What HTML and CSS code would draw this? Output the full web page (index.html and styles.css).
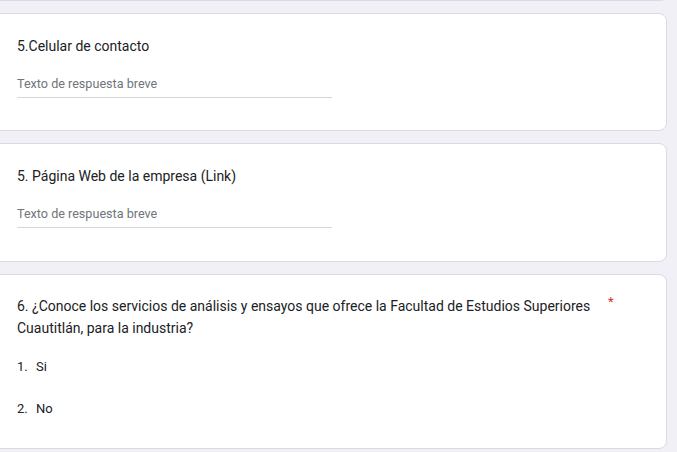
FILE: index.html
```html
<!DOCTYPE html>
<html lang="es">
<head>
<meta charset="utf-8">
<link rel="stylesheet" href="styles.css">
</head>
<body>
<div class="page">
  <div class="card card-prev"></div>
  <div class="card q-short first">
    <div class="q-title">5.Celular de contacto</div>
    <div class="short-input">Texto de respuesta breve</div>
  </div>
  <div class="card q-short">
    <div class="q-title">5. Página Web de la empresa (Link)</div>
    <div class="short-input">Texto de respuesta breve</div>
  </div>
  <div class="card q-choice">
    <div class="q-head">
      <div class="q-title long">6. ¿Conoce los servicios de análisis y ensayos que ofrece la Facultad de Estudios Superiores Cuautitlán, para la industria?</div>
      <span class="req">*</span>
    </div>
    <ol class="options">
      <li><span class="num">1.</span>Si</li>
      <li><span class="num">2.</span>No</li>
    </ol>
  </div>
</div>
</body>
</html>
```
FILE: styles.css
```css
html, body {
  margin: 0;
  padding: 0;
  background: #f0f0f6;
  font-family: Roboto, "Noto Sans", Arial, sans-serif;
  color: #202124;
  overflow: hidden;
}
.page {
  width: 677px;
  display: flex;
  flex-direction: column;
  gap: 12px;
  margin-top: -11px;
}
.card {
  background: #fff;
  border: 1px solid #dadce0;
  border-radius: 8px;
  margin-left: -12px;
  width: 679px;
  box-sizing: border-box;
  padding: 0 16px 0 28px;
  flex: none;
}
.card-prev {
  height: 12px;
}
.q-short {
  height: 119px;
  padding-top: 20px;
}
.q-short.first {
  height: 118px;
}
.q-title {
  font-size: 14px;
  line-height: 24px;
}
.short-input {
  margin-top: 16px;
  width: 315px;
  font-size: 12.6px;
  line-height: 20px;
  color: #70757a;
  padding-bottom: 3px;
  border-bottom: 1px solid #d7d7d7;
}
.q-choice {
  height: 175px;
  padding-top: 20px;
}
.q-head {
  display: flex;
  align-items: flex-start;
}
.q-title.long {
  width: 585px;
  flex: none;
  line-height: 22px;
}
.req {
  color: #d93025;
  font-size: 13px;
  line-height: 13px;
  margin-left: 6px;
}
.options {
  list-style: none;
  margin: 18px 0 0;
  padding: 0;
  font-size: 13px;
}
.options li {
  line-height: 20px;
  margin-bottom: 22px;
  display: flex;
}
.num {
  width: 19px;
}
```
